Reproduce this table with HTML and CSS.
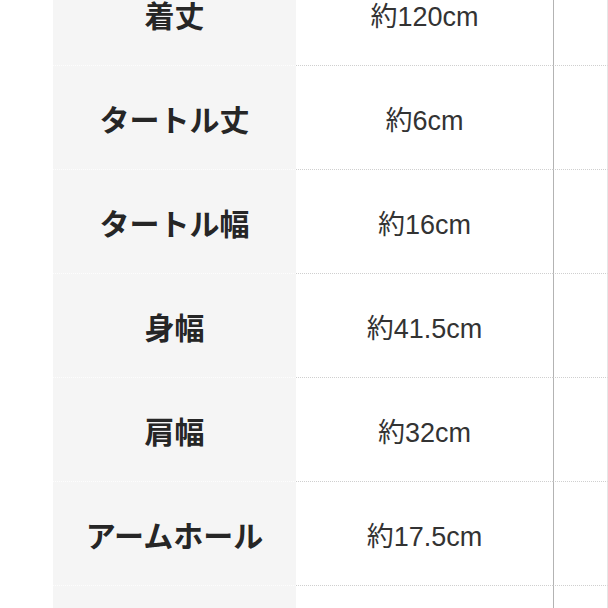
FILE: index.html
```html
<!DOCTYPE html>
<html lang="ja">
<head>
<meta charset="utf-8">
<link rel="stylesheet" href="styles.css">
</head>
<body>
<div class="sheet">
  <div class="cell label">着丈</div><div class="cell value">約120cm</div><div class="cell extra"></div>
  <div class="cell label">タートル丈</div><div class="cell value">約6cm</div><div class="cell extra"></div>
  <div class="cell label">タートル幅</div><div class="cell value">約16cm</div><div class="cell extra"></div>
  <div class="cell label">身幅</div><div class="cell value">約41.5cm</div><div class="cell extra"></div>
  <div class="cell label">肩幅</div><div class="cell value">約32cm</div><div class="cell extra"></div>
  <div class="cell label">アームホール</div><div class="cell value">約17.5cm</div><div class="cell extra"></div>
  <div class="cell label"></div><div class="cell value"></div><div class="cell extra"></div>
</div>
</body>
</html>
```
FILE: styles.css
```css
html, body {
  margin: 0;
  padding: 0;
  background: #ffffff;
  overflow: hidden;
}
.sheet {
  display: grid;
  grid-template-columns: 243px 257px 55px;
  grid-auto-rows: 104px;
  margin-left: 53px;
  margin-top: -38px;
}
.cell {
  box-sizing: border-box;
  display: flex;
  align-items: center;
  justify-content: center;
  border-bottom: 1px dotted #cfcfcf;
  white-space: nowrap;
}
.label {
  background: #f5f5f5;
  border-bottom: 1px dotted #fdfdfd;
  font-family: "Noto Sans CJK JP", sans-serif;
  font-weight: 700;
  font-size: 30px;
  color: #262626;
  padding-top: 1px;
}
.value {
  font-family: "Liberation Sans", "Noto Sans CJK JP", sans-serif;
  font-size: 27px;
  color: #333333;
  padding-top: 2px;
}
.extra {
  border-left: 1px solid #b3b3b3;
  border-right: 1px solid #e6e6e6;
}
```
